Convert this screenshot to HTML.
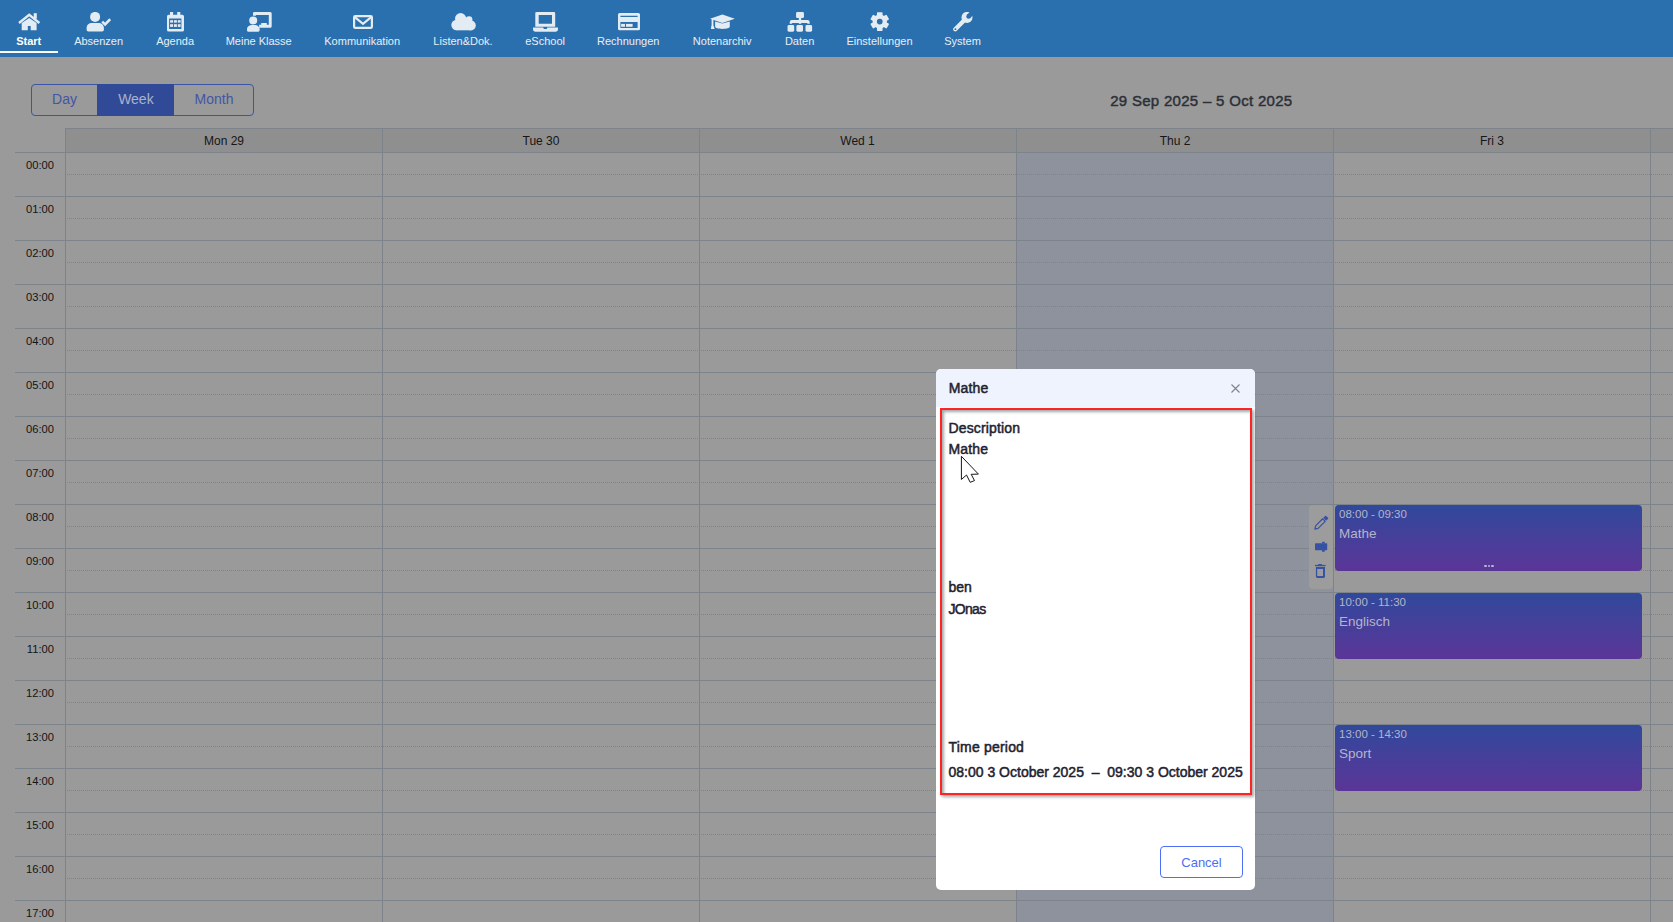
<!DOCTYPE html>
<html><head><meta charset="utf-8"><title>Calendar</title>
<style>
html,body{margin:0;padding:0;}
body{width:1673px;height:922px;overflow:hidden;position:relative;background:#9a9a9a;font-family:"Liberation Sans", sans-serif;}
.r{position:absolute;}
.r svg{display:block}
.t{position:absolute;line-height:1;white-space:pre;}
</style></head><body>
<div class="r" style="left:0px;top:0px;width:1673px;height:57px;background:#2b70ae"></div>
<div class="r" style="left:0px;top:51px;width:58px;height:2px;background:#ffffff"></div>
<div class="r" style="left:18px;top:13px;width:23px;height:18px"><svg viewBox="0 0 23 18" width="23" height="18"><polyline points="1.0,10.0 11.2,1.8 21.4,10.0" fill="none" stroke="#e3ebf3" stroke-width="2.4" stroke-linejoin="miter"/><rect x="15.7" y="0.2" width="3.1" height="5.5" fill="#e3ebf3"/><path fill="#e3ebf3" d="M3.7 9.9 L11.2 4.9 L18.6 9.9 V17.2 H12.7 V12.9 H9.8 V17.2 H3.7Z"/></svg></div>
<div class="r" style="left:86px;top:12px;width:25px;height:20px"><svg viewBox="0 0 25 20" width="25" height="20"><circle cx="9.1" cy="4.9" r="5.0" fill="#e3ebf3"/><path fill="#e3ebf3" d="M0.6 17.8 V16 C0.6 12.8 3 10.9 6 10.9 H12.4 C15.4 10.9 17.9 12.8 17.9 16 V17.8 Q17.9 19.5 16.2 19.5 H2.3 Q0.6 19.5 0.6 17.8Z"/><polyline points="16.2,9.6 19.1,12.4 24.2,7.2" fill="none" stroke="#e3ebf3" stroke-width="2.6"/></svg></div>
<div class="r" style="left:167px;top:12px;width:17px;height:20px"><svg viewBox="0 0 17 20" width="17" height="20"><path fill-rule="evenodd" fill="#e3ebf3" d="M1.6 2.8 H15.4 Q17 2.8 17 4.4 V17.9 Q17 19.5 15.4 19.5 H1.6 Q0 19.5 0 17.9 V4.4 Q0 2.8 1.6 2.8Z M2.1 6.5 V17.1 H14.4 V6.5Z"/><rect x="3" y="0" width="3.1" height="3" fill="#e3ebf3"/><rect x="10.2" y="0" width="3.1" height="3" fill="#e3ebf3"/><g fill="#e3ebf3"><rect x="3.1" y="8.2" width="3" height="2.4"/><rect x="7" y="8.2" width="2.9" height="2.4"/><rect x="10.8" y="8.2" width="2.8" height="2.4"/><rect x="3.1" y="12.2" width="3" height="2.7"/><rect x="7" y="12.2" width="2.9" height="2.7"/><rect x="10.8" y="12.2" width="2.8" height="2.7"/></g></svg></div>
<div class="r" style="left:247px;top:12px;width:25px;height:20px"><svg viewBox="0 0 25 20" width="25" height="20"><path fill="#e3ebf3" fill-rule="evenodd" d="M7.2 0 H23.2 Q24.7 0 24.7 1.5 V14.2 Q24.7 15.7 23.2 15.7 H12.1 V12.8 H21.8 V3.1 H8.9 V3.7 H6 V1.2 Q6 0 7.2 0Z"/><rect x="14.2" y="11" width="5.6" height="2" fill="#e3ebf3"/><circle cx="6.2" cy="8.4" r="4.0" fill="#e3ebf3"/><path fill="#e3ebf3" d="M-0.1 18 V17.6 C-0.1 14.8 2.2 13 5 13 H7.6 C10.4 13 12.7 14.8 12.7 17.6 V18 Q12.7 19.7 11 19.7 H1.6 Q-0.1 19.7 -0.1 18Z"/></svg></div>
<div class="r" style="left:353px;top:15px;width:20px;height:14px"><svg viewBox="0 0 20 14" width="20" height="14"><rect x="1.1" y="1.1" width="17.8" height="11.8" rx="1.2" fill="none" stroke="#e3ebf3" stroke-width="2.2"/><path fill="none" stroke="#e3ebf3" stroke-width="2.2" d="M1.8 2.2 L10 8.8 L18.2 2.2"/></svg></div>
<div class="r" style="left:451px;top:13px;width:25px;height:18px"><svg viewBox="0 0 25 18" width="25" height="18"><g fill="#e3ebf3"><circle cx="9.6" cy="5.6" r="5.6"/><circle cx="18" cy="6.6" r="3.4"/><circle cx="5.6" cy="12" r="5.3"/><circle cx="19.9" cy="12.5" r="4.9"/><rect x="5.6" y="7" width="14.3" height="10.3"/></g></svg></div>
<div class="r" style="left:533px;top:12px;width:25px;height:20px"><svg viewBox="0 0 25 20" width="25" height="20"><path fill="#e3ebf3" fill-rule="evenodd" d="M3.6 0 H21 Q22.2 0 22.2 1.2 V14.7 H2.3 V1.2 Q2.3 0 3.6 0Z M5.7 3.1 V11.8 H19 V3.1Z"/><path fill="#e3ebf3" d="M0 15.4 H10.2 L10.9 16.9 H13.7 L14.4 15.4 H25 V17.6 Q25 19.7 22.8 19.7 H2.2 Q0 19.7 0 17.6Z"/></svg></div>
<div class="r" style="left:618px;top:13px;width:22px;height:18px"><svg viewBox="0 0 22 18" width="22" height="18"><path fill="#e3ebf3" fill-rule="evenodd" d="M1.6 0 H20.4 Q22 0 22 1.6 V15.7 Q22 17.3 20.4 17.3 H1.6 Q0 17.3 0 15.7 V1.6 Q0 0 1.6 0Z M2.4 2.7 V4 H19.6 V2.7Z M2.4 9.1 V14.9 H19.6 V9.1Z"/><rect x="3.1" y="10.9" width="3.9" height="2.9" fill="#e3ebf3"/><rect x="8" y="10.9" width="6.6" height="2.9" fill="#e3ebf3"/></svg></div>
<div class="r" style="left:710px;top:14px;width:25px;height:15px"><svg viewBox="0 0 25 15" width="25" height="15"><path fill="#e3ebf3" d="M-0.1 4.8 L12.4 0.4 L24.8 4.8 L12.4 9Z"/><path fill="#e3ebf3" d="M5.1 7.4 L12.4 9.6 L19.8 7.4 V12.6 C19.8 14.2 16.6 15 12.4 15 C8.2 15 5.1 14.2 5.1 12.6Z"/><rect x="1.6" y="5" width="1.8" height="7.5" fill="#e3ebf3"/><path fill="#e3ebf3" d="M0.9 14.9 L1.4 11.8 H3.6 L4.6 14.9Z"/></svg></div>
<div class="r" style="left:787px;top:12px;width:26px;height:20px"><svg viewBox="0 0 26 20" width="26" height="20"><g fill="#e3ebf3"><rect x="9.05" y="0" width="7.9" height="6" rx="1.2"/><rect x="11.8" y="5.5" width="2.4" height="6.3"/><path d="M2.7 11.8 V10.3 Q2.7 8.1 4.9 8.1 H20.5 Q22.7 8.1 22.7 10.3 V11.8 H20.3 V10.9 H5.1 V11.8Z"/><rect x="0.55" y="13" width="6.65" height="6.7" rx="1.4"/><rect x="9.4" y="13" width="6.6" height="6.7" rx="1.4"/><rect x="18.5" y="13" width="6.6" height="6.7" rx="1.4"/></g></svg></div>
<div class="r" style="left:870px;top:12px;width:20px;height:20px"><svg viewBox="0 0 20 20" width="20" height="20"><g transform="translate(9.75 9.6)" fill="#e3ebf3"><circle r="7.1"/><rect x="-2.8" y="-9.35" width="5.6" height="4.5" rx="0.8" transform="rotate(0)"/><rect x="-2.8" y="-9.35" width="5.6" height="4.5" rx="0.8" transform="rotate(60)"/><rect x="-2.8" y="-9.35" width="5.6" height="4.5" rx="0.8" transform="rotate(120)"/><rect x="-2.8" y="-9.35" width="5.6" height="4.5" rx="0.8" transform="rotate(180)"/><rect x="-2.8" y="-9.35" width="5.6" height="4.5" rx="0.8" transform="rotate(240)"/><rect x="-2.8" y="-9.35" width="5.6" height="4.5" rx="0.8" transform="rotate(300)"/></g><circle cx="9.75" cy="9.6" r="2.85" fill="#2b70ae"/></svg></div>
<div class="r" style="left:953px;top:12px;width:21px;height:20px"><svg viewBox="0 0 21 20" width="21" height="20"><g fill="#e3ebf3"><circle cx="14" cy="5.4" r="5.5"/><line x1="2.3" y1="17.3" x2="12" y2="7.6" stroke="#e3ebf3" stroke-width="4.3" stroke-linecap="round"/></g><circle cx="15.6" cy="4.4" r="2.3" fill="#2b70ae"/><line x1="15.6" y1="4.4" x2="22" y2="-2" stroke="#2b70ae" stroke-width="4.6"/><circle cx="2.4" cy="17.2" r="0.9" fill="#2b70ae"/></svg></div>
<div class="t" style="left:-471.3px;width:1000px;text-align:center;top:35.69px;font-size:11px;color:#ffffff;font-weight:bold;">Start</div>
<div class="t" style="left:-401.4px;width:1000px;text-align:center;top:35.69px;font-size:11px;color:#e8eef5;font-weight:normal;">Absenzen</div>
<div class="t" style="left:-324.9px;width:1000px;text-align:center;top:35.69px;font-size:11px;color:#e8eef5;font-weight:normal;">Agenda</div>
<div class="t" style="left:-241.3px;width:1000px;text-align:center;top:35.69px;font-size:11px;color:#e8eef5;font-weight:normal;">Meine Klasse</div>
<div class="t" style="left:-137.8px;width:1000px;text-align:center;top:35.69px;font-size:11px;color:#e8eef5;font-weight:normal;">Kommunikation</div>
<div class="t" style="left:-37px;width:1000px;text-align:center;top:35.69px;font-size:11px;color:#e8eef5;font-weight:normal;">Listen&amp;Dok.</div>
<div class="t" style="left:45.10000000000002px;width:1000px;text-align:center;top:35.69px;font-size:11px;color:#e8eef5;font-weight:normal;">eSchool</div>
<div class="t" style="left:128.20000000000005px;width:1000px;text-align:center;top:35.69px;font-size:11px;color:#e8eef5;font-weight:normal;">Rechnungen</div>
<div class="t" style="left:222.20000000000005px;width:1000px;text-align:center;top:35.69px;font-size:11px;color:#e8eef5;font-weight:normal;">Notenarchiv</div>
<div class="t" style="left:299.6px;width:1000px;text-align:center;top:35.69px;font-size:11px;color:#e8eef5;font-weight:normal;">Daten</div>
<div class="t" style="left:379.5px;width:1000px;text-align:center;top:35.69px;font-size:11px;color:#e8eef5;font-weight:normal;">Einstellungen</div>
<div class="t" style="left:462.5px;width:1000px;text-align:center;top:35.69px;font-size:11px;color:#e8eef5;font-weight:normal;">System</div>
<div class="r" style="left:31px;top:84px;width:223px;height:32px;border:1px solid #3d55a6;border-radius:4px;box-sizing:border-box"></div>
<div class="r" style="left:97px;top:84px;width:77px;height:32px;background:#314a98"></div>
<div class="t" style="left:-435.5px;width:1000px;text-align:center;top:91.85px;font-size:14px;color:#4156a6;font-weight:normal;">Day</div>
<div class="t" style="left:-364.1px;width:1000px;text-align:center;top:91.85px;font-size:14px;color:#aab2ca;font-weight:normal;">Week</div>
<div class="t" style="left:-286px;width:1000px;text-align:center;top:91.85px;font-size:14px;color:#4156a6;font-weight:normal;">Month</div>
<div class="t" style="left:701.3px;width:1000px;text-align:center;top:92.90px;font-size:15px;color:#2b3038;font-weight:normal;letter-spacing:0.3px;-webkit-text-stroke:0.45px #2b3038">29 Sep 2025 – 5 Oct 2025</div>
<div class="r" style="left:65px;top:128px;width:1608px;height:24px;background:#8f8f8f"></div>
<div class="r" style="left:65px;top:128px;width:1608px;height:1px;background:#7c838b"></div>
<div class="r" style="left:1016px;top:153px;width:317px;height:769px;background:#8e929c"></div>
<div class="r" style="left:15px;top:152px;width:1658px;height:1px;background:#7c838b"></div>
<div class="r" style="left:65px;top:174px;width:1608px;height:1px;background-image:linear-gradient(90deg,#7c838b 50%,transparent 50%);background-size:2px 1px"></div>
<div class="t" style="left:-946px;width:1000px;text-align:right;top:159.72px;font-size:11.2px;color:#141414;font-weight:normal;">00:00</div>
<div class="r" style="left:15px;top:196px;width:1658px;height:1px;background:#7c838b"></div>
<div class="r" style="left:65px;top:218px;width:1608px;height:1px;background-image:linear-gradient(90deg,#7c838b 50%,transparent 50%);background-size:2px 1px"></div>
<div class="t" style="left:-946px;width:1000px;text-align:right;top:203.72px;font-size:11.2px;color:#141414;font-weight:normal;">01:00</div>
<div class="r" style="left:15px;top:240px;width:1658px;height:1px;background:#7c838b"></div>
<div class="r" style="left:65px;top:262px;width:1608px;height:1px;background-image:linear-gradient(90deg,#7c838b 50%,transparent 50%);background-size:2px 1px"></div>
<div class="t" style="left:-946px;width:1000px;text-align:right;top:247.72px;font-size:11.2px;color:#141414;font-weight:normal;">02:00</div>
<div class="r" style="left:15px;top:284px;width:1658px;height:1px;background:#7c838b"></div>
<div class="r" style="left:65px;top:306px;width:1608px;height:1px;background-image:linear-gradient(90deg,#7c838b 50%,transparent 50%);background-size:2px 1px"></div>
<div class="t" style="left:-946px;width:1000px;text-align:right;top:291.72px;font-size:11.2px;color:#141414;font-weight:normal;">03:00</div>
<div class="r" style="left:15px;top:328px;width:1658px;height:1px;background:#7c838b"></div>
<div class="r" style="left:65px;top:350px;width:1608px;height:1px;background-image:linear-gradient(90deg,#7c838b 50%,transparent 50%);background-size:2px 1px"></div>
<div class="t" style="left:-946px;width:1000px;text-align:right;top:335.72px;font-size:11.2px;color:#141414;font-weight:normal;">04:00</div>
<div class="r" style="left:15px;top:372px;width:1658px;height:1px;background:#7c838b"></div>
<div class="r" style="left:65px;top:394px;width:1608px;height:1px;background-image:linear-gradient(90deg,#7c838b 50%,transparent 50%);background-size:2px 1px"></div>
<div class="t" style="left:-946px;width:1000px;text-align:right;top:379.72px;font-size:11.2px;color:#141414;font-weight:normal;">05:00</div>
<div class="r" style="left:15px;top:416px;width:1658px;height:1px;background:#7c838b"></div>
<div class="r" style="left:65px;top:438px;width:1608px;height:1px;background-image:linear-gradient(90deg,#7c838b 50%,transparent 50%);background-size:2px 1px"></div>
<div class="t" style="left:-946px;width:1000px;text-align:right;top:423.72px;font-size:11.2px;color:#141414;font-weight:normal;">06:00</div>
<div class="r" style="left:15px;top:460px;width:1658px;height:1px;background:#7c838b"></div>
<div class="r" style="left:65px;top:482px;width:1608px;height:1px;background-image:linear-gradient(90deg,#7c838b 50%,transparent 50%);background-size:2px 1px"></div>
<div class="t" style="left:-946px;width:1000px;text-align:right;top:467.72px;font-size:11.2px;color:#141414;font-weight:normal;">07:00</div>
<div class="r" style="left:15px;top:504px;width:1658px;height:1px;background:#7c838b"></div>
<div class="r" style="left:65px;top:526px;width:1608px;height:1px;background-image:linear-gradient(90deg,#7c838b 50%,transparent 50%);background-size:2px 1px"></div>
<div class="t" style="left:-946px;width:1000px;text-align:right;top:511.72px;font-size:11.2px;color:#141414;font-weight:normal;">08:00</div>
<div class="r" style="left:15px;top:548px;width:1658px;height:1px;background:#7c838b"></div>
<div class="r" style="left:65px;top:570px;width:1608px;height:1px;background-image:linear-gradient(90deg,#7c838b 50%,transparent 50%);background-size:2px 1px"></div>
<div class="t" style="left:-946px;width:1000px;text-align:right;top:555.72px;font-size:11.2px;color:#141414;font-weight:normal;">09:00</div>
<div class="r" style="left:15px;top:592px;width:1658px;height:1px;background:#7c838b"></div>
<div class="r" style="left:65px;top:614px;width:1608px;height:1px;background-image:linear-gradient(90deg,#7c838b 50%,transparent 50%);background-size:2px 1px"></div>
<div class="t" style="left:-946px;width:1000px;text-align:right;top:599.72px;font-size:11.2px;color:#141414;font-weight:normal;">10:00</div>
<div class="r" style="left:15px;top:636px;width:1658px;height:1px;background:#7c838b"></div>
<div class="r" style="left:65px;top:658px;width:1608px;height:1px;background-image:linear-gradient(90deg,#7c838b 50%,transparent 50%);background-size:2px 1px"></div>
<div class="t" style="left:-946px;width:1000px;text-align:right;top:643.72px;font-size:11.2px;color:#141414;font-weight:normal;">11:00</div>
<div class="r" style="left:15px;top:680px;width:1658px;height:1px;background:#7c838b"></div>
<div class="r" style="left:65px;top:702px;width:1608px;height:1px;background-image:linear-gradient(90deg,#7c838b 50%,transparent 50%);background-size:2px 1px"></div>
<div class="t" style="left:-946px;width:1000px;text-align:right;top:687.72px;font-size:11.2px;color:#141414;font-weight:normal;">12:00</div>
<div class="r" style="left:15px;top:724px;width:1658px;height:1px;background:#7c838b"></div>
<div class="r" style="left:65px;top:746px;width:1608px;height:1px;background-image:linear-gradient(90deg,#7c838b 50%,transparent 50%);background-size:2px 1px"></div>
<div class="t" style="left:-946px;width:1000px;text-align:right;top:731.72px;font-size:11.2px;color:#141414;font-weight:normal;">13:00</div>
<div class="r" style="left:15px;top:768px;width:1658px;height:1px;background:#7c838b"></div>
<div class="r" style="left:65px;top:790px;width:1608px;height:1px;background-image:linear-gradient(90deg,#7c838b 50%,transparent 50%);background-size:2px 1px"></div>
<div class="t" style="left:-946px;width:1000px;text-align:right;top:775.72px;font-size:11.2px;color:#141414;font-weight:normal;">14:00</div>
<div class="r" style="left:15px;top:812px;width:1658px;height:1px;background:#7c838b"></div>
<div class="r" style="left:65px;top:834px;width:1608px;height:1px;background-image:linear-gradient(90deg,#7c838b 50%,transparent 50%);background-size:2px 1px"></div>
<div class="t" style="left:-946px;width:1000px;text-align:right;top:819.72px;font-size:11.2px;color:#141414;font-weight:normal;">15:00</div>
<div class="r" style="left:15px;top:856px;width:1658px;height:1px;background:#7c838b"></div>
<div class="r" style="left:65px;top:878px;width:1608px;height:1px;background-image:linear-gradient(90deg,#7c838b 50%,transparent 50%);background-size:2px 1px"></div>
<div class="t" style="left:-946px;width:1000px;text-align:right;top:863.72px;font-size:11.2px;color:#141414;font-weight:normal;">16:00</div>
<div class="r" style="left:15px;top:900px;width:1658px;height:1px;background:#7c838b"></div>
<div class="r" style="left:65px;top:922px;width:1608px;height:1px;background-image:linear-gradient(90deg,#7c838b 50%,transparent 50%);background-size:2px 1px"></div>
<div class="t" style="left:-946px;width:1000px;text-align:right;top:907.72px;font-size:11.2px;color:#141414;font-weight:normal;">17:00</div>
<div class="r" style="left:15px;top:944px;width:1658px;height:1px;background:#7c838b"></div>
<div class="r" style="left:65px;top:128px;width:1px;height:794px;background:#7c838b"></div>
<div class="r" style="left:382px;top:128px;width:1px;height:794px;background:#7c838b"></div>
<div class="r" style="left:699px;top:128px;width:1px;height:794px;background:#7c838b"></div>
<div class="r" style="left:1016px;top:128px;width:1px;height:794px;background:#7c838b"></div>
<div class="r" style="left:1333px;top:128px;width:1px;height:794px;background:#7c838b"></div>
<div class="r" style="left:1650px;top:128px;width:1px;height:794px;background:#7c838b"></div>
<div class="t" style="left:-276px;width:1000px;text-align:center;top:135.24px;font-size:12px;color:#161616;font-weight:normal;">Mon 29</div>
<div class="t" style="left:41px;width:1000px;text-align:center;top:135.24px;font-size:12px;color:#161616;font-weight:normal;">Tue 30</div>
<div class="t" style="left:357.5px;width:1000px;text-align:center;top:135.24px;font-size:12px;color:#161616;font-weight:normal;">Wed 1</div>
<div class="t" style="left:675px;width:1000px;text-align:center;top:135.24px;font-size:12px;color:#161616;font-weight:normal;">Thu 2</div>
<div class="t" style="left:992px;width:1000px;text-align:center;top:135.24px;font-size:12px;color:#161616;font-weight:normal;">Fri 3</div>
<div class="r" style="left:1335px;top:505px;width:307px;height:66px;background:linear-gradient(180deg,#30499a 0%,#44409a 45%,#5b3598 100%);border-radius:4px"></div>
<div class="t" style="left:1339px;top:509.37px;font-size:11.5px;color:#b5b5c7;font-weight:normal;">08:00 - 09:30</div>
<div class="t" style="left:1339px;top:526.67px;font-size:13.5px;color:#b5b5c7;font-weight:normal;">Mathe</div>
<div class="r" style="left:1335px;top:593px;width:307px;height:66px;background:linear-gradient(180deg,#30499a 0%,#44409a 45%,#5b3598 100%);border-radius:4px"></div>
<div class="t" style="left:1339px;top:597.37px;font-size:11.5px;color:#b5b5c7;font-weight:normal;">10:00 - 11:30</div>
<div class="t" style="left:1339px;top:614.67px;font-size:13.5px;color:#b5b5c7;font-weight:normal;">Englisch</div>
<div class="r" style="left:1335px;top:725px;width:307px;height:66px;background:linear-gradient(180deg,#30499a 0%,#44409a 45%,#5b3598 100%);border-radius:4px"></div>
<div class="t" style="left:1339px;top:729.37px;font-size:11.5px;color:#b5b5c7;font-weight:normal;">13:00 - 14:30</div>
<div class="t" style="left:1339px;top:746.67px;font-size:13.5px;color:#b5b5c7;font-weight:normal;">Sport</div>
<div class="r" style="left:1484.2px;top:564.6px;width:2.599999999999909px;height:2.7999999999999545px;background:#b9b9c9;border-radius:1px"></div>
<div class="r" style="left:1487.8px;top:564.6px;width:2.599999999999909px;height:2.7999999999999545px;background:#b9b9c9;border-radius:1px"></div>
<div class="r" style="left:1491.4px;top:564.6px;width:2.599999999999909px;height:2.7999999999999545px;background:#b9b9c9;border-radius:1px"></div>
<div class="r" style="left:1309px;top:505px;width:24px;height:84px;background:#9c9c9c;border-radius:4px"></div>
<div class="r" style="left:1309px;top:510px;width:24px;height:72px"><svg width="24" height="72" viewBox="1309 510 24 72"><g transform="translate(1314.6 529.4) rotate(-45)"><path d="M0.4 0 L3.2 -1.8 H13.2 V1.8 H3.2 Z" fill="none" stroke="#3752a2" stroke-width="1.2" stroke-linejoin="round"/><rect x="14.3" y="-2.1" width="3.4" height="4.2" rx="0.7" fill="#3752a2"/></g><rect x="1315" y="543.3" width="12.2" height="6.9" rx="0.6" fill="#3752a2"/><rect x="1322" y="541.8" width="2.8" height="1.6" rx="0.6" fill="#3752a2"/><rect x="1322" y="550" width="2.8" height="1.8" rx="0.6" fill="#3752a2"/><rect x="1315" y="564.9" width="10.6" height="1.3" fill="#3752a2"/><rect x="1318.1" y="564" width="3.9" height="1.2" rx="0.4" fill="#3752a2"/><path fill-rule="evenodd" fill="#3752a2" d="M1315.9 567 H1325 V576.6 Q1325 577.9 1323.7 577.9 H1317.2 Q1315.9 577.9 1315.9 576.6Z M1317.2 568.9 V576 H1323 V568.9Z"/></svg></div>
<div class="r" style="left:936px;top:369px;width:319px;height:521px;background:#ffffff;border-radius:5px;overflow:hidden"></div>
<div class="r" style="left:936px;top:369px;width:319px;height:38px;background:#eef3fd;border-radius:5px 5px 0 0"></div>
<div class="t" style="left:948.7px;top:381.15px;font-size:14px;color:#1e2230;font-weight:normal;-webkit-text-stroke:0.5px #1e2230;letter-spacing:0.15px">Mathe</div>
<div class="r" style="left:1231px;top:384px;width:9px;height:9px"><svg width="9" height="9" viewBox="0 0 9 9"><path d="M0.5 0.5 L8.5 8.5 M8.5 0.5 L0.5 8.5" stroke="#80838b" stroke-width="1.1"/></svg></div>
<div class="r" style="left:940px;top:408px;width:312px;height:387px;border:2px solid #ff2424;box-sizing:border-box;box-shadow:2px 2px 3px rgba(0,0,0,0.35), inset 2px 2px 3px rgba(0,0,0,0.35)"></div>
<div class="t" style="left:948.5px;top:420.55px;font-size:14px;color:#1e2230;font-weight:normal;-webkit-text-stroke:0.5px #1e2230;letter-spacing:0.15px">Description</div>
<div class="t" style="left:948.5px;top:442.45px;font-size:14px;color:#1e2230;font-weight:normal;-webkit-text-stroke:0.5px #1e2230;letter-spacing:0.15px">Mathe</div>
<div class="t" style="left:948.5px;top:580.15px;font-size:14px;color:#1e2230;font-weight:normal;-webkit-text-stroke:0.5px #1e2230;">ben</div>
<div class="t" style="left:948.5px;top:602.35px;font-size:14px;color:#1e2230;font-weight:normal;-webkit-text-stroke:0.5px #1e2230;letter-spacing:-0.7px">JOnas</div>
<div class="t" style="left:948.5px;top:740.15px;font-size:14px;color:#1e2230;font-weight:normal;-webkit-text-stroke:0.5px #1e2230;letter-spacing:0.2px">Time period</div>
<div class="t" style="left:948.5px;top:765.25px;font-size:14px;color:#1e2230;font-weight:normal;-webkit-text-stroke:0.5px #1e2230;">08:00 3 October 2025 &nbsp;–&nbsp; 09:30 3 October 2025</div>
<div class="r" style="left:1160px;top:846px;width:83px;height:32px;border:1px solid #4d6ef5;border-radius:4px;box-sizing:border-box"></div>
<div class="t" style="left:701.5px;width:1000px;text-align:center;top:856.00px;font-size:13px;color:#4d6ef5;font-weight:normal;">Cancel</div>
<div class="r" style="left:958px;top:453px;width:24px;height:32px"><svg width="24" height="32" viewBox="958 453 24 32"><path d="M961.4 456.3 L961.4 479.5 L966.5 475 L970.2 482.3 L974.5 480.6 L971.2 474.3 L978.4 474.1 Z" fill="#ffffff" stroke="#161616" stroke-width="1" stroke-linejoin="miter"/></svg></div>
</body></html>
